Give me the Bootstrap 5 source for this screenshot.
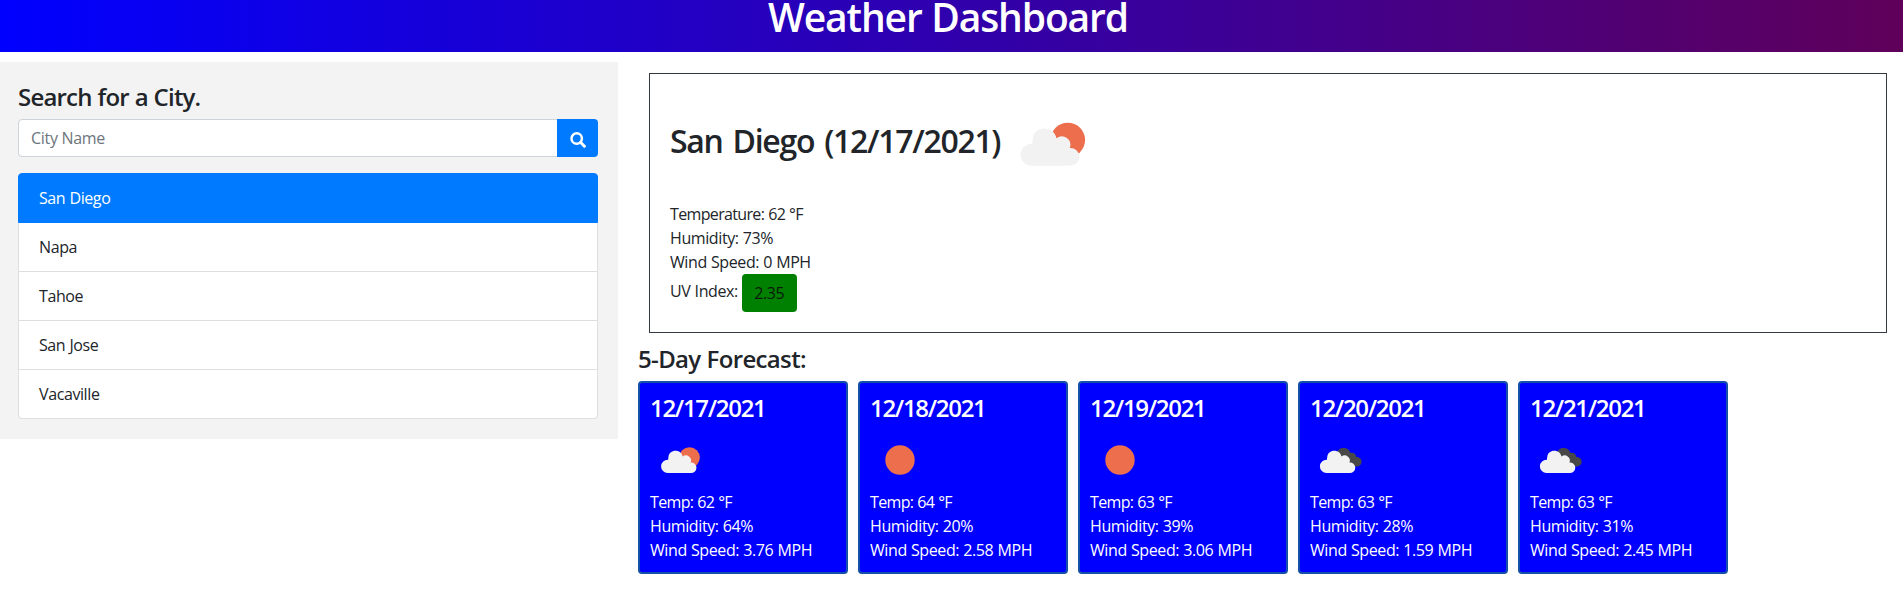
<!DOCTYPE html>
<html lang="en">
<head>
<meta charset="utf-8">
<title>Weather Dashboard</title>
<link href="https://cdn.jsdelivr.net/npm/bootstrap@5.3.0/dist/css/bootstrap.min.css" rel="stylesheet">
<style>
body{font-family:"Open Sans","Noto Sans",sans-serif;font-size:16px;line-height:24px;color:#212529;letter-spacing:-.4px;word-spacing:.4px;overflow:hidden}
h1,h2,h3,h4{font-weight:600;line-height:1.2;margin:0;white-space:nowrap}
.top-bar{height:52px;margin-bottom:10px;padding-right:7px;background:linear-gradient(to right,#00f,#5f005a)}
.top-bar h1{font-size:39px;letter-spacing:-1.1px;line-height:34px}
.side-panel{width:618px;height:377px;background:#f3f3f3;padding:21px 20px 0 18px}
.side-panel h3{font-size:24px;letter-spacing:-.8px;margin-bottom:7px}
.form-control{height:38px;border-color:#ced4da;border-radius:4px;letter-spacing:-.3px}
.form-control::placeholder{color:#6c757d}
.btn-search{background:#007bff;width:41px;border-radius:4px;padding:0}
.list-group{--bs-list-group-border-radius:4px;--bs-list-group-active-bg:#007bff;--bs-list-group-active-border-color:#007bff;--bs-list-group-border-color:#dfdfdf;--bs-list-group-item-padding-x:20px;--bs-list-group-item-padding-y:12px;margin-top:16px}
.main-panel{padding-left:20px}
.current-box{margin:11px 16px 0 11px;height:260px;border:1px solid #343a40;padding:20px 20px 0}
.current-box h2{font-size:32px;letter-spacing:-1.3px;word-spacing:3px;margin:0 2px 6px 0}
.temp-line{letter-spacing:-.65px}
.uv-label{padding-top:5px}
.uv-btn{background:green;color:#0b1a0b;border-radius:4px;height:38px;width:55px;display:inline-block;padding:7px 0;text-align:center}
.forecast-title{font-size:24px;letter-spacing:-.65px;margin:12px 0 7px}
.day-box{width:210px;height:193px;background:#00f;border:2px solid #1550a8;border-radius:4px;color:#fff;padding:11px 10px 0;white-space:nowrap}
.day-box h4{font-size:24px;letter-spacing:-1.3px;margin:0 0 7px}
.day-box svg{display:block}
</style>
</head>
<body>
<svg width="0" height="0" class="position-absolute" aria-hidden="true">
<defs>
<path id="cloud" d="M31.5 65.7a11 11 0 0 1-11-11a11 11 0 0 1 11.8-10.9A12.6 12.6 0 0 1 32.8 39C33 32.5 38.500 28.500 44.500 28.500C50.500 28.500 55 32 56.500 38.300A8.500 8.500 0 0 1 69.800 48A9 9 0 0 1 79.500 56.500A9.200 9.200 0 0 1 70.300 65.700Z"/>
<symbol id="few" viewBox="2 -6 100 100"><circle cx="67.800" cy="40" r="17.300" fill="#ec6e4c"/><use href="#cloud" fill="#f2f2f2"/></symbol>
<symbol id="sun" viewBox="0 0 100 100"><circle cx="50" cy="50" r="24.500" fill="#ec6e4c"/></symbol>
<symbol id="broken" viewBox="2 -6 100 100"><path fill="#484848" d="M47 34C48 27 52 24 58 24C64 24 68 27 69 32C75 31 79 34 79 39C84 39 88 42 88 47C88 52 84 55 79 55H55Z"/><use href="#cloud" x="-2" fill="#f2f2f2"/></symbol>
</defs>
</svg>
<header class="top-bar text-white text-center"><h1>Weather Dashboard</h1></header>
<div class="d-flex align-items-start">
<aside class="side-panel flex-shrink-0">
<h3>Search for a City.</h3>
<div class="input-group">
<input class="form-control" type="text" placeholder="City Name">
<button class="btn btn-search" aria-label="Search"><svg width="16" height="16" viewBox="0 0 16 16" fill="none" stroke="#fff"><circle cx="6.700" cy="6.500" r="5.200" stroke-width="2.500"/><path d="M10.500 10.300l3.900 3.900" stroke-width="3" stroke-linecap="round"/></svg></button>
</div>
<ul class="list-group">
<li class="list-group-item active">San Diego</li>
<li class="list-group-item">Napa</li>
<li class="list-group-item">Tahoe</li>
<li class="list-group-item">San Jose</li>
<li class="list-group-item">Vacaville</li>
</ul>
</aside>
<main class="main-panel flex-grow-1">
<section class="current-box">
<div class="d-flex align-items-center"><h2>San Diego (12/17/2021)</h2><svg width="100" height="100"><use href="#few"/></svg></div>
<div class="current-data mt-2"><div class="temp-line">Temperature: 62 °F</div><div>Humidity: 73%</div><div>Wind Speed: 0 MPH</div>
<div class="d-flex gap-1"><span class="uv-label">UV Index:</span><span class="uv-btn">2.35</span></div></div>
</section>
<h3 class="forecast-title">5-Day Forecast:</h3>
<div class="d-flex days" style="gap:10px">
<div class="day-box"><h4>12/17/2021</h4><svg width="60" height="60"><use href="#few"/></svg><div class="temp-line">Temp: 62 °F</div><div>Humidity: 64%</div><div>Wind Speed: 3.76 MPH</div></div>
<div class="day-box"><h4>12/18/2021</h4><svg width="60" height="60"><use href="#sun"/></svg><div class="temp-line">Temp: 64 °F</div><div>Humidity: 20%</div><div>Wind Speed: 2.58 MPH</div></div>
<div class="day-box"><h4>12/19/2021</h4><svg width="60" height="60"><use href="#sun"/></svg><div class="temp-line">Temp: 63 °F</div><div>Humidity: 39%</div><div>Wind Speed: 3.06 MPH</div></div>
<div class="day-box"><h4>12/20/2021</h4><svg width="60" height="60"><use href="#broken"/></svg><div class="temp-line">Temp: 63 °F</div><div>Humidity: 28%</div><div>Wind Speed: 1.59 MPH</div></div>
<div class="day-box"><h4>12/21/2021</h4><svg width="60" height="60"><use href="#broken"/></svg><div class="temp-line">Temp: 63 °F</div><div>Humidity: 31%</div><div>Wind Speed: 2.45 MPH</div></div>
</div>
</main>
</div>
<script src="https://cdn.jsdelivr.net/npm/bootstrap@5.3.0/dist/js/bootstrap.bundle.min.js"></script>
</body>
</html>
